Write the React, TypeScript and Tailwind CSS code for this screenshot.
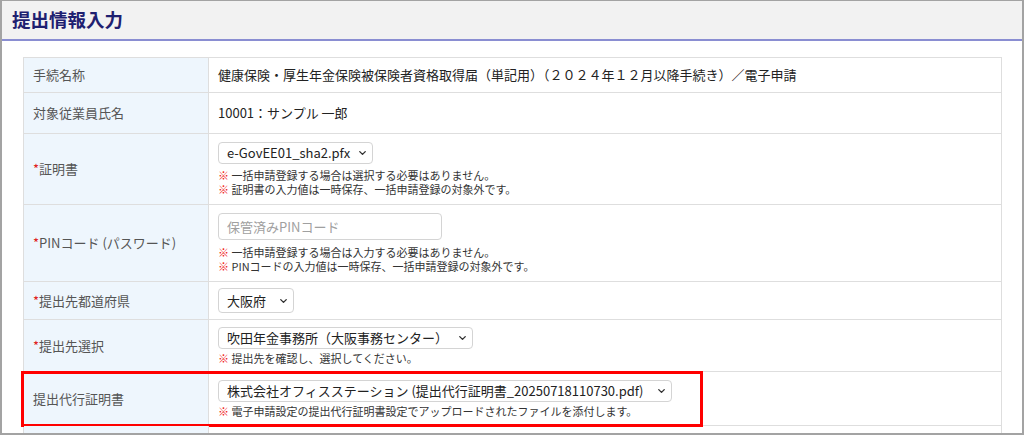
import { ChevronDown } from "lucide-react";

const font = { fontFamily: '"Noto Sans CJK JP", "Noto Sans", sans-serif' };

function Note({ children }: { children: React.ReactNode }) {
  return (
    <p className="text-[11px] leading-[14px] text-[#333]">
      <span className="text-[#f01818]">※</span> {children}
    </p>
  );
}

function FakeSelect({ value, width, height = "h-[22px]" }: { value: string; width: string; height?: string }) {
  return (
    <div className={`relative ${width}`}>
      <select
        defaultValue={value}
        className={`${height} w-full appearance-none rounded-[4px] border border-[#d4d4d4] bg-white py-0 pl-[8px] pr-[18px] text-[13px] leading-[18px] text-[#222] outline-none`}
      >
        <option>{value}</option>
      </select>
      <ChevronDown
        size={11}
        strokeWidth={3}
        className="pointer-events-none absolute right-[5px] top-1/2 -translate-y-1/2 text-[#333]"
      />
    </div>
  );
}

function Row({
  label,
  required,
  height,
  children,
  highlight,
}: {
  label: string;
  required?: boolean;
  height: string;
  children?: React.ReactNode;
  highlight?: boolean;
}) {
  return (
    <div className={`relative flex border-b border-[#dedede] ${height}`}>
      <div className="flex w-[185px] shrink-0 items-center border-r border-[#dedede] bg-[#eef6fd] pl-[9px] text-[13px] text-[#555]">
        {required && <span className="text-[#e02020]">*</span>}
        {label}
      </div>
      <div className="flex flex-1 flex-col justify-center pl-[9px] text-[13px] text-[#222]">{children}</div>
      {highlight && (
        <div className="pointer-events-none absolute -left-[3px] -top-[1px] h-[56px] w-[682px] border-[3px] border-[#ff0000]" />
      )}
    </div>
  );
}

export default function App() {
  return (
    <div
      style={font}
      className="box-border h-[435px] w-[1024px] overflow-hidden border-x-2 border-b-2 border-t border-[#a3a3a3] bg-white"
    >
      <div className="box-border flex h-[40px] items-center border-b-2 border-[#8a8ed2] bg-[#f2f2f2] pl-[10px]">
        <h1 className="text-[18.5px] font-bold text-[#1e2070]">提出情報入力</h1>
      </div>

      <div className="mx-[21px] mt-[16px] w-[979px] border-x border-t border-[#dedede]">
        <Row label="手続名称" height="h-[35px]">
          <span>健康保険・厚生年金保険被保険者資格取得届（単記用）（２０２４年１２月以降手続き）／電子申請</span>
        </Row>
        <Row label="対象従業員氏名" height="h-[41px]">
          <span>10001：サンプル 一郎</span>
        </Row>
        <Row label="証明書" required height="h-[71px]">
          <FakeSelect value="e-GovEE01_sha2.pfx" width="w-[155px]" />
          <div className="mt-[4px]">
            <Note>一括申請登録する場合は選択する必要はありません。</Note>
            <Note>証明書の入力値は一時保存、一括申請登録の対象外です。</Note>
          </div>
        </Row>
        <Row label="PINコード (パスワード)" required height="h-[77px]">
          <input
            placeholder="保管済みPINコード"
            className="box-border h-[27px] w-[224px] rounded-[4px] border border-[#d4d4d4] px-[8px] text-[13px] text-[#222] outline-none placeholder:text-[#a0a0a0]"
          />
          <div className="mt-[5px]">
            <Note>一括申請登録する場合は入力する必要はありません。</Note>
            <Note>PINコードの入力値は一時保存、一括申請登録の対象外です。</Note>
          </div>
        </Row>
        <Row label="提出先都道府県" required height="h-[38px]">
          <FakeSelect value="大阪府" width="w-[76px]" height="h-[25px]" />
        </Row>
        <Row label="提出先選択" required height="h-[52px]">
          <FakeSelect value="吹田年金事務所（大阪事務センター）" width="w-[255px]" />
          <div className="mt-[2px]">
            <Note>提出先を確認し、選択してください。</Note>
          </div>
        </Row>
        <Row label="提出代行証明書" height="h-[54px]" highlight>
          <FakeSelect value="株式会社オフィスステーション (提出代行証明書_20250718110730.pdf)" width="w-[454px]" />
          <div className="mt-[2px]">
            <Note>電子申請設定の提出代行証明書設定でアップロードされたファイルを添付します。</Note>
          </div>
        </Row>
        <Row label="" height="h-[40px]" />
      </div>
    </div>
  );
}
